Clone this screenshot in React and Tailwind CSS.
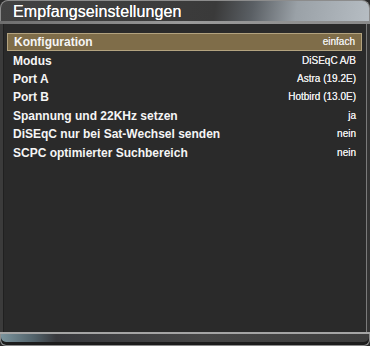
import React from 'react';

const rows = [
  { label: 'Konfiguration', value: 'einfach', selected: true },
  { label: 'Modus', value: 'DiSEqC A/B' },
  { label: 'Port A', value: 'Astra (19.2E)' },
  { label: 'Port B', value: 'Hotbird (13.0E)' },
  { label: 'Spannung und 22KHz setzen', value: 'ja' },
  { label: 'DiSEqC nur bei Sat-Wechsel senden', value: 'nein' },
  { label: 'SCPC optimierter Suchbereich', value: 'nein' },
];

export default function App() {
  return (
    <div className="w-[370px] h-[346px] flex flex-col bg-[#2a2a2a] font-['Liberation_Sans',Arial,sans-serif] overflow-hidden">
      <div className="h-[21px] shrink-0 rounded-t-[8px] border border-b-0 border-[#8c8c8c] bg-[linear-gradient(100deg,#424242_0%,#3a3a3a_58%,#5a5f64_68%,#9aa1a7_80%,#b6bdc3_100%)] flex items-center pl-[12px] pt-[1px]">
        <h1 className="text-[16px] leading-none text-white tracking-[0.1px] [text-shadow:0_0_0.5px_#fff]">Empfangseinstellungen</h1>
      </div>
      <div className="h-[3px] shrink-0 bg-[linear-gradient(90deg,#6e6e6e,#9a9a9a_50%,#8a8a8a)]" />

      <div className="flex-1 flex flex-col pt-[9px] pl-[7px] pr-[5px] bg-[#2a2a2a] border-l-[3px] border-l-[#3b3b3b] border-r-[3px] border-r-[#343434] shadow-[inset_-1px_0_0_#7a7a7a,inset_1px_0_0_#202020]">
        {rows.map(r => (
          <div
            key={r.label}
            className={`h-[18.4px] flex items-center justify-between px-[6px] -ml-[3px] ${r.selected ? 'bg-[#7f6d49] border border-[#b3a37f]' : ''}`}
          >
            <span className="text-[12px] font-bold text-[#f5f5f5] leading-none">{r.label}</span>
            <span className="text-[10px] text-[#e8e8e8] leading-none [text-shadow:0_0_0.4px_#fff]">{r.value}</span>
          </div>
        ))}
      </div>

      <div className="h-[2px] shrink-0 bg-[#a5a5a5]" />
      <div className="h-[12px] shrink-0 rounded-b-[6px] border border-t-0 border-[#8c8c8c] bg-[linear-gradient(90deg,#7a939c_0%,#52626a_9%,#38393d_15%,#464646_55%,#3d3d3d_100%)] shadow-[inset_0_-3px_0_#1c1c1c]" />
    </div>
  );
}
